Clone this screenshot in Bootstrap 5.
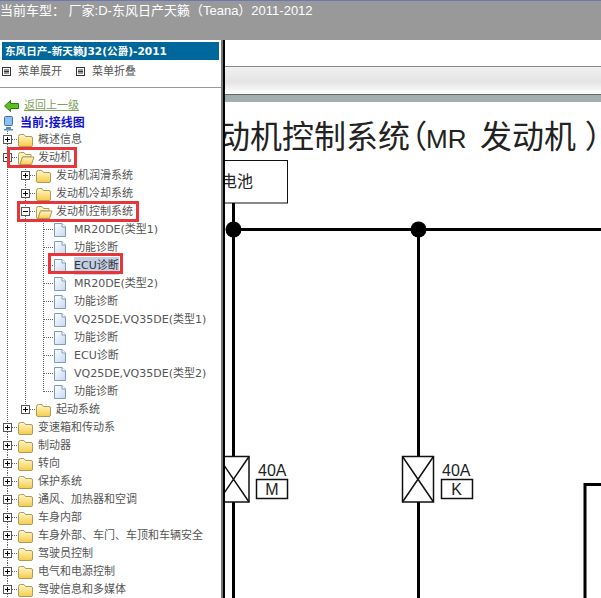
<!DOCTYPE html>
<html lang="zh-CN">
<head>
    <meta charset="UTF-8">
    <meta name="viewport" content="width=device-width, initial-scale=1.0">
    <title>接线图</title>
    <link href="https://cdn.jsdelivr.net/npm/bootstrap@5.3.0/dist/css/bootstrap.min.css" rel="stylesheet">
    <style>
        html, body { height: 100%; overflow: hidden; background: #fff; }
        body { font-family: "DejaVu Sans", "Noto Sans CJK SC", sans-serif; font-size: 11px; line-height: 18px; color: #555; }
        .car-bar { height: 40px; padding-top: 1px; background: #999; color: #fff; font: 13px/18px "Liberation Sans", "Noto Sans CJK SC", sans-serif; border-top: 1px solid #6a78b8; flex: none; }
        .side-panel { width: 221px; flex: none; overflow: hidden; }
        .side-title { margin: 2px 2px 0; height: 18px; width: 217px; padding-left: 3px; background: #00679c; color: #fff; font-weight: 700; font-size: 10.6px; }
        .menu-row { height: 28px; border-bottom: 1px solid #999; gap: 7px; padding: 3px 0 7px 2px; }
        .menu-row span + svg { margin-left: 7px; }
        .back-row { height: 18px; margin-top: 9px; padding-left: 4px; gap: 5px; }
        .back-row a { color: #7d9f58; }
        .here-row { height: 16px; padding-left: 3px; gap: 6px; color: #1212d0; font-weight: 700; font-size: 12px; }
        .tree-row { height: 18px; position: relative; white-space: nowrap; }
        .tree-row svg { width: 18px; height: 18px; flex: none; }
        .tree-row .lbl { margin-left: 2px; }
        .red-mark { position: absolute; border: 3px solid #e8353a; pointer-events: none; }
        .mark-a { left: 7px; top: -2px; width: 70px; height: 21px; }
        .mark-b { left: 17px; top: -2px; width: 122px; height: 21px; }
        .mark-c { left: 48px; top: -4px; width: 75px; height: 21px; }
        .sel-text { background: #c3cfe4; color: #333; }
        .split-bar { width: 4px; flex: none; background: linear-gradient(90deg, #777 50%, #000 50%); }
        .right-panel { min-width: 0; }
        .tool-top { height: 27px; border-bottom: 1px solid #888; flex: none; }
        .tool-strip { height: 28px; flex: none; background: linear-gradient(#f0f0f0, #e4e4e4 55%, #fff); border-bottom: 1px solid #666; }
        .tool-under { height: 7px; flex: none; background: #a3afaf; }
        .diagram { display: block; width: 376px; height: 496px; font-family: "Liberation Sans", "Noto Sans CJK SC", sans-serif; fill: #222; }
        .diagram-title { font-size: 32px; font-feature-settings: "palt"; }
        .diagram-title .latin { font-size: 26px; }
    </style>
</head>
<body class="d-flex flex-column">
    <svg width="0" height="0" class="position-absolute">
        <defs>
            <linearGradient id="fold" x1="0" y1="0" x2="0" y2="1"><stop offset="0" stop-color="#fff8cc"/><stop offset="1" stop-color="#f6cc48"/></linearGradient>
            <linearGradient id="leaf" x1="0" y1="0" x2="1" y2="1"><stop offset="0" stop-color="#fff"/><stop offset="1" stop-color="#c4d8f2"/></linearGradient>
            <symbol id="vl" viewBox="0 0 18 18"><path d="M7.5 0V18" stroke="#666" stroke-dasharray="1 1"/></symbol>
            <symbol id="tee" viewBox="0 0 18 18"><path d="M7.5 0V18M8 8.5H18" stroke="#666" stroke-dasharray="1 1"/></symbol>
            <symbol id="end" viewBox="0 0 18 18"><path d="M7.5 0V9M8 8.5H18" stroke="#666" stroke-dasharray="1 1"/></symbol>
            <symbol id="plus" viewBox="0 0 18 18"><path d="M7.5 0V4M7.5 13V18M12 8.5H18" stroke="#666" stroke-dasharray="1 1"/><rect x="3.5" y="4.5" width="8" height="8" fill="#fff" stroke="#555"/><path d="M5 8.5H10M7.5 6V11" stroke="#000"/></symbol>
            <symbol id="plus-end" viewBox="0 0 18 18"><path d="M7.5 0V4M12 8.5H18" stroke="#666" stroke-dasharray="1 1"/><rect x="3.5" y="4.5" width="8" height="8" fill="#fff" stroke="#555"/><path d="M5 8.5H10M7.5 6V11" stroke="#000"/></symbol>
            <symbol id="minus" viewBox="0 0 18 18"><path d="M7.5 0V4M7.5 13V18M12 8.5H18" stroke="#666" stroke-dasharray="1 1"/><rect x="3.5" y="4.5" width="8" height="8" fill="#fff" stroke="#555"/><path d="M5 8.5H10" stroke="#000"/></symbol>
            <symbol id="folder" viewBox="0 0 18 18"><path d="M.5 5.5Q.5 3.5 2.5 3.5H6L7.5 5.5H13Q14.5 5.5 14.5 7V14Q14.5 15.5 13 15.5H2Q.5 15.5 .5 14Z" fill="url(#fold)" stroke="#b09a5a"/></symbol>
            <symbol id="folder-open" viewBox="0 0 18 18"><path d="M.5 5.5Q.5 3.5 2.5 3.5H6L7.5 5.5H13V8H4.5L2 15.5H1Q.5 15.5 .5 14Z" fill="#fff6c4" stroke="#b09a5a"/><path d="M4.5 8H16L13.5 15.5H2Z" fill="url(#fold)" stroke="#b09a5a"/></symbol>
            <symbol id="page" viewBox="0 0 18 18"><path d="M.5 2.5H8L11.5 6V15.5H.5Z" fill="url(#leaf)" stroke="#7f9db9"/><path d="M8 2.5V6H11.5" fill="#fff" stroke="#7f9db9"/></symbol>
            <symbol id="doc-btn" viewBox="0 0 9 9"><rect x=".5" y=".5" width="8" height="8" fill="#fff" stroke="#333"/><path d="M2 3H7M2 4.5H7M2 6H7" stroke="#333"/></symbol>
        </defs>
    </svg>

    <div class="car-bar">当前车型： 厂家:D-东风日产天籁（Teana）2011-2012</div>

    <div class="d-flex flex-grow-1 overflow-hidden">
        <div class="side-panel">
            <div class="side-title">东风日产-新天籁J32(公爵)-2011</div>
            <div class="menu-row d-flex align-items-center">
                <svg width="9" height="9"><use href="#doc-btn"/></svg><span>菜单展开</span>
                <svg width="9" height="9"><use href="#doc-btn"/></svg><span>菜单折叠</span>
            </div>
            <div class="back-row d-flex align-items-center">
                <svg width="15" height="12" viewBox="0 0 15 12"><path d="M.5 6L6.5 .5V3.5H14.5V8.5H6.5V11.5Z" fill="#58c020" stroke="#2d7a10"/></svg>
                <a href="#">返回上一级</a>
            </div>
            <div class="here-row d-flex align-items-center">
                <svg width="11" height="15" viewBox="0 0 11 15"><rect x="1.5" y=".5" width="8" height="9" rx="1" fill="#8cc0ee" stroke="#3f72b0"/><path d="M3 11H8V13H10V14.5H1V13H3Z" fill="#5c8cc0"/></svg>
                <span>当前:接线图</span>
            </div>

            <div class="tree-row d-flex"><svg><use href="#plus"/></svg><svg><use href="#folder"/></svg><span class="lbl">概述信息</span></div>
            <div class="tree-row d-flex"><svg><use href="#minus"/></svg><svg><use href="#folder-open"/></svg><span class="lbl">发动机</span><i class="red-mark mark-a"></i></div>
            <div class="tree-row d-flex"><svg><use href="#vl"/></svg><svg><use href="#plus"/></svg><svg><use href="#folder"/></svg><span class="lbl">发动机润滑系统</span></div>
            <div class="tree-row d-flex"><svg><use href="#vl"/></svg><svg><use href="#plus"/></svg><svg><use href="#folder"/></svg><span class="lbl">发动机冷却系统</span></div>
            <div class="tree-row d-flex"><svg><use href="#vl"/></svg><svg><use href="#minus"/></svg><svg><use href="#folder-open"/></svg><span class="lbl">发动机控制系统</span><i class="red-mark mark-b"></i></div>
            <div class="tree-row d-flex"><svg><use href="#vl"/></svg><svg><use href="#vl"/></svg><svg><use href="#tee"/></svg><svg><use href="#page"/></svg><span class="lbl">MR20DE(类型1)</span></div>
            <div class="tree-row d-flex"><svg><use href="#vl"/></svg><svg><use href="#vl"/></svg><svg><use href="#tee"/></svg><svg><use href="#page"/></svg><span class="lbl">功能诊断</span></div>
            <div class="tree-row d-flex"><svg><use href="#vl"/></svg><svg><use href="#vl"/></svg><svg><use href="#tee"/></svg><svg><use href="#page"/></svg><span class="lbl sel-text">ECU诊断</span><i class="red-mark mark-c"></i></div>
            <div class="tree-row d-flex"><svg><use href="#vl"/></svg><svg><use href="#vl"/></svg><svg><use href="#tee"/></svg><svg><use href="#page"/></svg><span class="lbl">MR20DE(类型2)</span></div>
            <div class="tree-row d-flex"><svg><use href="#vl"/></svg><svg><use href="#vl"/></svg><svg><use href="#tee"/></svg><svg><use href="#page"/></svg><span class="lbl">功能诊断</span></div>
            <div class="tree-row d-flex"><svg><use href="#vl"/></svg><svg><use href="#vl"/></svg><svg><use href="#tee"/></svg><svg><use href="#page"/></svg><span class="lbl">VQ25DE,VQ35DE(类型1)</span></div>
            <div class="tree-row d-flex"><svg><use href="#vl"/></svg><svg><use href="#vl"/></svg><svg><use href="#tee"/></svg><svg><use href="#page"/></svg><span class="lbl">功能诊断</span></div>
            <div class="tree-row d-flex"><svg><use href="#vl"/></svg><svg><use href="#vl"/></svg><svg><use href="#tee"/></svg><svg><use href="#page"/></svg><span class="lbl">ECU诊断</span></div>
            <div class="tree-row d-flex"><svg><use href="#vl"/></svg><svg><use href="#vl"/></svg><svg><use href="#tee"/></svg><svg><use href="#page"/></svg><span class="lbl">VQ25DE,VQ35DE(类型2)</span></div>
            <div class="tree-row d-flex"><svg><use href="#vl"/></svg><svg><use href="#vl"/></svg><svg><use href="#end"/></svg><svg><use href="#page"/></svg><span class="lbl">功能诊断</span></div>
            <div class="tree-row d-flex"><svg><use href="#vl"/></svg><svg><use href="#plus-end"/></svg><svg><use href="#folder"/></svg><span class="lbl">起动系统</span></div>
            <div class="tree-row d-flex"><svg><use href="#plus"/></svg><svg><use href="#folder"/></svg><span class="lbl">变速箱和传动系</span></div>
            <div class="tree-row d-flex"><svg><use href="#plus"/></svg><svg><use href="#folder"/></svg><span class="lbl">制动器</span></div>
            <div class="tree-row d-flex"><svg><use href="#plus"/></svg><svg><use href="#folder"/></svg><span class="lbl">转向</span></div>
            <div class="tree-row d-flex"><svg><use href="#plus"/></svg><svg><use href="#folder"/></svg><span class="lbl">保护系统</span></div>
            <div class="tree-row d-flex"><svg><use href="#plus"/></svg><svg><use href="#folder"/></svg><span class="lbl">通风、加热器和空调</span></div>
            <div class="tree-row d-flex"><svg><use href="#plus"/></svg><svg><use href="#folder"/></svg><span class="lbl">车身内部</span></div>
            <div class="tree-row d-flex"><svg><use href="#plus"/></svg><svg><use href="#folder"/></svg><span class="lbl">车身外部、车门、车顶和车辆安全</span></div>
            <div class="tree-row d-flex"><svg><use href="#plus"/></svg><svg><use href="#folder"/></svg><span class="lbl">驾驶员控制</span></div>
            <div class="tree-row d-flex"><svg><use href="#plus"/></svg><svg><use href="#folder"/></svg><span class="lbl">电气和电源控制</span></div>
            <div class="tree-row d-flex"><svg><use href="#plus"/></svg><svg><use href="#folder"/></svg><span class="lbl">驾驶信息和多媒体</span></div>
        </div>

        <div class="split-bar"></div>

        <div class="right-panel flex-grow-1 d-flex flex-column overflow-hidden">
            <div class="tool-top"></div>
            <div class="tool-strip"></div>
            <div class="tool-under"></div>
            <svg class="diagram" viewBox="225 102 376 496">
                <text class="diagram-title" x="186" y="148">发动机控制系统（<tspan class="latin">MR</tspan><tspan x="480">发动机</tspan><tspan x="586">）</tspan></text>

                <rect x="180" y="160.5" width="107.5" height="42.5" fill="#fff" stroke="#111"/>
                <text x="221" y="187" font-size="16">电池</text>

                <path d="M233.5 203V598M418.5 229V598M233 229.5H601" stroke="#000" stroke-width="3" fill="none"/>
                <circle cx="233.5" cy="229.5" r="8" fill="#000"/>
                <circle cx="418.5" cy="229.5" r="8" fill="#000"/>

                <g fill="#fff" stroke="#111" stroke-width="1.5">
                    <rect x="218" y="456.5" width="31" height="45.5"/>
                    <path d="M218 456.5L249 502M249 456.5L218 502" fill="none"/>
                    <rect x="402.5" y="456.5" width="31" height="45.5"/>
                    <path d="M402.5 456.5L433.5 502M433.5 456.5L402.5 502" fill="none"/>
                    <rect x="256.5" y="479.5" width="31" height="19"/>
                    <rect x="441.5" y="479.5" width="31" height="19"/>
                </g>
                <text x="258" y="476" font-size="16">40A</text>
                <text x="272" y="495" font-size="16" text-anchor="middle">M</text>
                <text x="442" y="476" font-size="16">40A</text>
                <text x="456.5" y="495" font-size="16" text-anchor="middle">K</text>

                <path d="M585 598V484.5H601" stroke="#000" stroke-width="3" fill="none"/>
            </svg>
        </div>
    </div>

    <script src="https://cdn.jsdelivr.net/npm/bootstrap@5.3.0/dist/js/bootstrap.bundle.min.js"></script>
</body>
</html>
